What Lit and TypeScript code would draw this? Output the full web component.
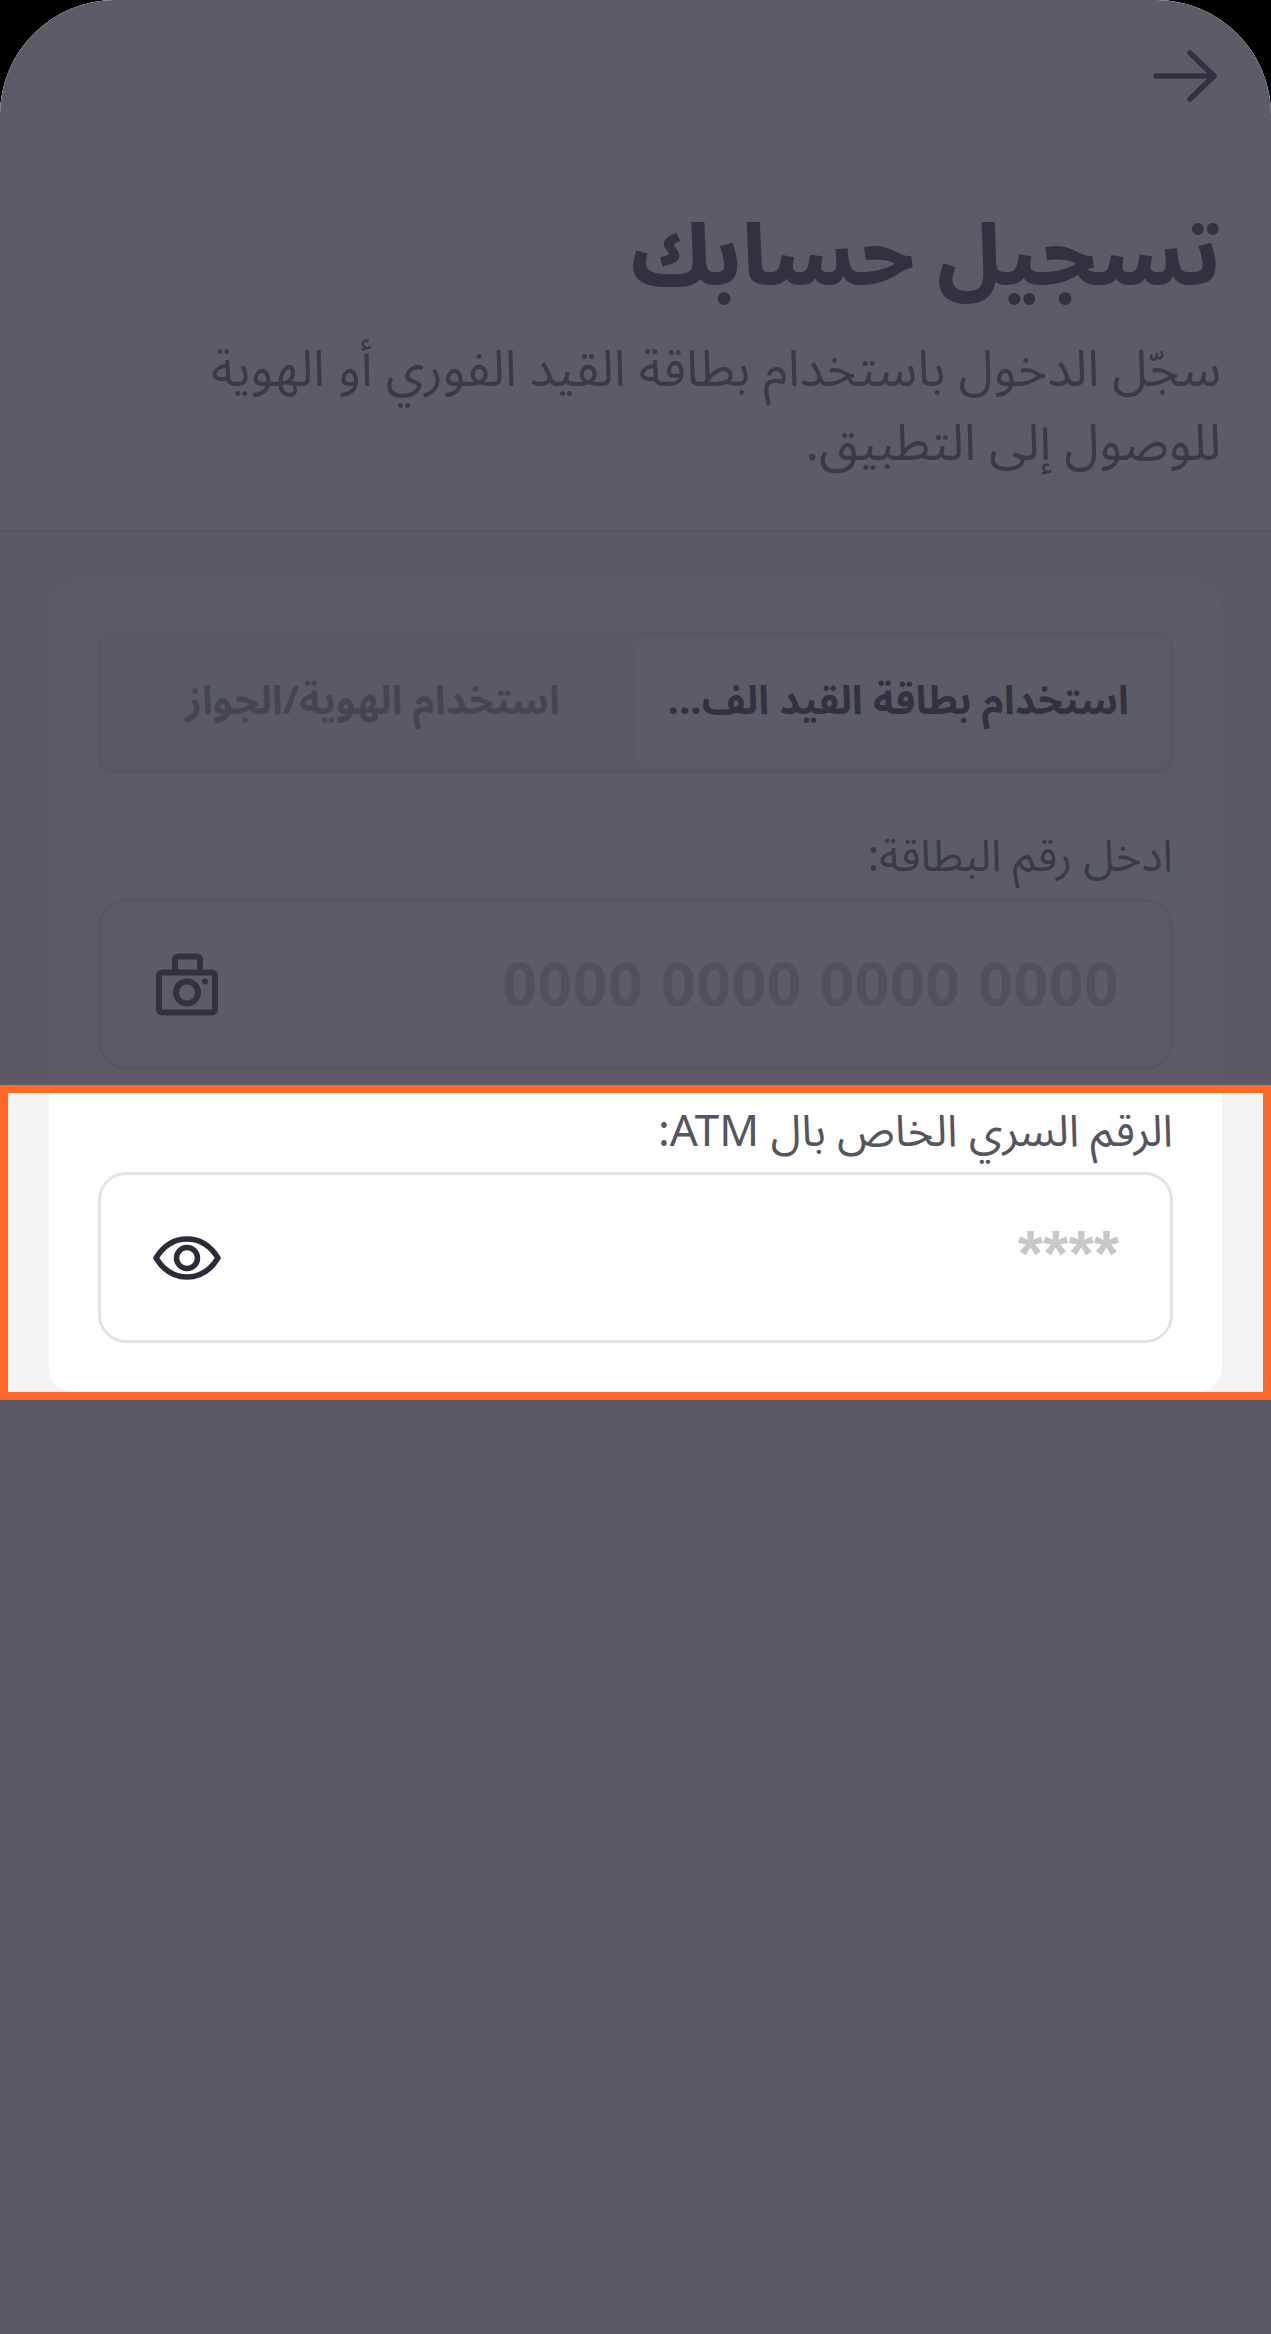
import { LitElement, html, css } from "lit";
import { customElement } from "lit/decorators.js";

const FONT = css`"Noto Sans Arabic", "Noto Sans", "DejaVu Sans", sans-serif`;

@customElement("app-root")
export class AppRoot extends LitElement {
  static styles = css`
    :host { display: block; width: 1271px; height: 2334px; background: #000; overflow: hidden; }
    .screen {
      position: relative; display: flex; flex-direction: column;
      height: 2334px; background: #f3f3f4; border-radius: 115px 115px 0 0; overflow: hidden;
      font-family: ${FONT}; color: #55555f;
    }
    .overlay { position: absolute; inset: 0; z-index: 1; background: rgba(51, 51, 65, 0.8); }
    .header {
      background: #fff; height: 532px; box-sizing: border-box; border-bottom: 2px solid #dcdcdf;
      padding: 40px 50px 0; display: flex; flex-direction: column; align-items: flex-start;
    }
    .back { width: 72px; height: 72px; display: block; margin-inline-end: -2px; }
    h1 { margin: 91px 0 0; font-size: 84.6px; line-height: 110px; font-weight: 800; color: #2b2b3b; }
    .sub { margin: 20px 0 0; font-size: 50.5px; line-height: 74px; color: #55555f; font-weight: 400; }
    .card-top {
      margin: 49px 49px 0; background: #fff; border-radius: 30px 30px 0 0;
      padding: 51px 49px 15px; display: flex; flex-direction: column;
    }
    .tabs {
      height: 139px; box-sizing: border-box; border: 2px solid #ececee; border-radius: 14px;
      background: #f5f5f6; display: flex; padding: 4px; box-shadow: 0 2px 2px #e0e0e2;
    }
    .tab {
      flex: 1 1 0; display: flex; align-items: center; justify-content: center;
      font-size: 40px; font-weight: 700; color: #8e8e96; white-space: nowrap; padding-inline-end: 6px;
    }
    .tab.on { background: #fff; color: #2b2b3b; border-radius: 12px; padding-inline: 6px 0; }
    .label { font-size: 44px; line-height: 60px; color: #55555f; }
    .card-top .label { margin-top: 56px; margin-bottom: 12px; }
    .field {
      height: 171px; box-sizing: border-box; border: 3px solid #e4e4e6; border-radius: 28px;
      display: flex; align-items: center; justify-content: space-between; padding: 0 51px 0 50px;
    }
    .ph {
      font-family: "Liberation Sans", sans-serif; font-size: 63.4px; font-weight: 700;
      color: #c8c8c8; line-height: 1;
    }
    .field svg { display: block; }
    .spot { position: relative; z-index: 2; border: 8px solid #ff6a2b; height: 315px; box-sizing: border-box; background: #f3f3f4; }
    .spot-card {
      margin: 0 41px; height: 299px; box-sizing: border-box; background: #fff;
      border-radius: 0 0 24px 24px; padding: 9px 49px 0; display: flex; flex-direction: column;
    }
    .spot-card .label { margin-bottom: 10px; }
    .ph.stars { align-self: center; margin-top: -8px; font-size: 65px; }
  `;

  render() {
    return html`
      <div class="screen" dir="rtl">
        <div class="overlay"></div>
        <header class="header">
          <svg class="back" viewBox="0 0 72 72" fill="none" stroke="#2b2b3b" stroke-width="5.5" stroke-linecap="round" stroke-linejoin="round">
            <path d="M7 36H65M41 13L65 36L41 59" />
          </svg>
          <h1>تسجيل حسابك</h1>
          <p class="sub">سجّل الدخول باستخدام بطاقة القيد الفوري أو الهوية<br />للوصول إلى التطبيق.</p>
        </header>
        <section class="card-top">
          <div class="tabs">
            <div class="tab on">استخدام بطاقة القيد الف...</div>
            <div class="tab">استخدام الهوية/الجواز</div>
          </div>
          <div class="label">ادخل رقم البطاقة:</div>
          <div class="field">
            <span class="ph">0000 0000 0000 0000</span>
            <svg width="72" height="72" viewBox="0 0 72 72" fill="none" stroke="#2b2b3b" stroke-width="6" stroke-linejoin="round">
              <rect x="8" y="23.5" width="56" height="40" rx="3" />
              <path d="M24 23.5V10.5a3 3 0 0 1 3-3H46a3 3 0 0 1 3 3V23.5" />
              <circle cx="36" cy="43.5" r="11" />
              <circle cx="54" cy="32.5" r="3" fill="#2b2b3b" stroke="none" />
            </svg>
          </div>
        </section>
        <section class="spot">
          <div class="spot-card">
            <div class="label">الرقم السري الخاص بال ATM:</div>
            <div class="field">
              <span class="ph stars">****</span>
              <svg width="72" height="72" viewBox="0 0 72 72" fill="none" stroke="#2b2b3b" stroke-width="5.5" stroke-linejoin="round">
                <path d="M5 36C13 23 23 17 36 17C49 17 59 23 67 36C59 49 49 55 36 55C23 55 13 49 5 36Z" />
                <circle cx="36" cy="36" r="10.5" />
              </svg>
            </div>
          </div>
        </section>
      </div>
    `;
  }
}
